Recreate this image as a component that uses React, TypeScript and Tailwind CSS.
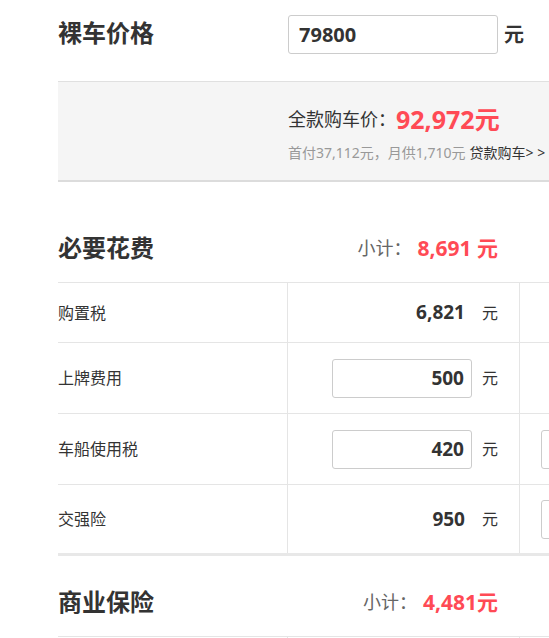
import React from "react";

const font = { fontFamily: '"Noto Sans", "Noto Sans CJK SC", sans-serif' };

type Row = {
  label: string;
  value: string;
  editable: boolean;
  extraInput: boolean;
  height: string;
};

const rows: Row[] = [
  { label: "购置税", value: "6,821", editable: false, extraInput: false, height: "h-[60px]" },
  { label: "上牌费用", value: "500", editable: true, extraInput: false, height: "h-[71px]" },
  { label: "车船使用税", value: "420", editable: true, extraInput: true, height: "h-[71px]" },
  { label: "交强险", value: "950", editable: false, extraInput: true, height: "h-[71px]" },
];

function SectionHeader({ title, total }: { title: string; total: React.ReactNode }) {
  return (
    <div className="flex w-[440px] items-center justify-between">
      <h2 className="text-[24px] font-bold leading-[32px] text-[#333]">{title}</h2>
      <div className="flex items-center">
        <span className="text-[18px] leading-[28px] text-[#666]">小计：</span>
        <span className="ml-[6px] text-[21px] font-bold leading-[28px] text-[#ff4a55]">{total}</span>
      </div>
    </div>
  );
}

export default function App() {
  return (
    <div className="w-[549px] h-[638px] overflow-hidden bg-white" style={font}>
      <div className="w-[1000px] pl-[58px]">
        {/* 裸车价格 */}
        <div className="flex h-[39px] items-center mt-[15px]">
          <h1 className="w-[230px] mb-[4px] text-[24px] font-bold leading-[32px] text-[#333]">裸车价格</h1>
          <input
            readOnly
            value="79800"
            className="h-[39px] w-[210px] rounded-[3px] border border-[#ccc] px-[10px] text-[20px] font-bold text-[#333] outline-none"
          />
          <span className="ml-[6px] text-[20px] font-bold text-[#333]">元</span>
        </div>

        {/* 全款购车价 */}
        <div className="mt-[27px] h-[101px] border-t border-b-2 border-[#e0e0e0] border-b-[#dcdcdc] bg-[#f5f5f5] pl-[230px] pt-[21px]">
          <div className="flex items-center h-[32px]">
            <span className="text-[18px] leading-[32px] text-[#333]">全款购车价：</span>
            <span className="text-[25px] font-bold leading-[32px] text-[#ff4a55]">92,972元</span>
          </div>
          <div className="mt-[8px] flex items-center text-[14px] leading-[20px]">
            <span className="text-[#999]">首付37,112元，月供1,710元</span>
            <span className="ml-[4px] text-[#333]">贷款购车&gt; &gt;</span>
          </div>
        </div>

        {/* 必要花费 */}
        <div className="pt-[50px] pb-[18px]">
          <SectionHeader title="必要花费" total="8,691 元" />
        </div>

        <div className="border-t border-[#e5e5e5]">
          {rows.map((row, i) => (
            <div
              key={row.label}
              className={`flex ${row.height} ${
                i === rows.length - 1 ? "border-b-[3px] border-[#e8e8e8]" : "border-b border-[#e5e5e5]"
              }`}
            >
              <div className="flex w-[229px] items-center text-[16px] text-[#333]">{row.label}</div>
              <div className="flex w-[232px] items-center justify-end border-l border-[#e5e5e5] pr-[21px]">
                {row.editable ? (
                  <input
                    readOnly
                    value={row.value}
                    className="h-[39px] w-[140px] rounded-[3px] border border-[#ccc] pr-[7px] text-right text-[19px] font-bold text-[#333] outline-none"
                  />
                ) : (
                  <span className="w-[140px] pr-[7px] text-right text-[19px] font-bold text-[#333]">{row.value}</span>
                )}
                <span className="ml-[10px] text-[16px] text-[#333]">元</span>
              </div>
              <div className="flex w-[232px] items-center border-l border-r border-[#e5e5e5] pl-[21px]">
                {row.extraInput && (
                  <input
                    readOnly
                    value=""
                    className="h-[39px] w-[140px] rounded-[3px] border border-[#ccc] outline-none"
                  />
                )}
              </div>
            </div>
          ))}
        </div>

        {/* 商业保险 */}
        <div className="pt-[30px] pb-[18px]">
          <SectionHeader title="商业保险" total="4,481元" />
        </div>
        <div className="border-t border-[#e5e5e5] h-[20px]">
          <div className="flex h-full">
            <div className="w-[229px]" />
            <div className="w-[232px] border-l border-[#e5e5e5]" />
            <div className="w-[232px] border-l border-[#e5e5e5]" />
          </div>
        </div>
      </div>
    </div>
  );
}
